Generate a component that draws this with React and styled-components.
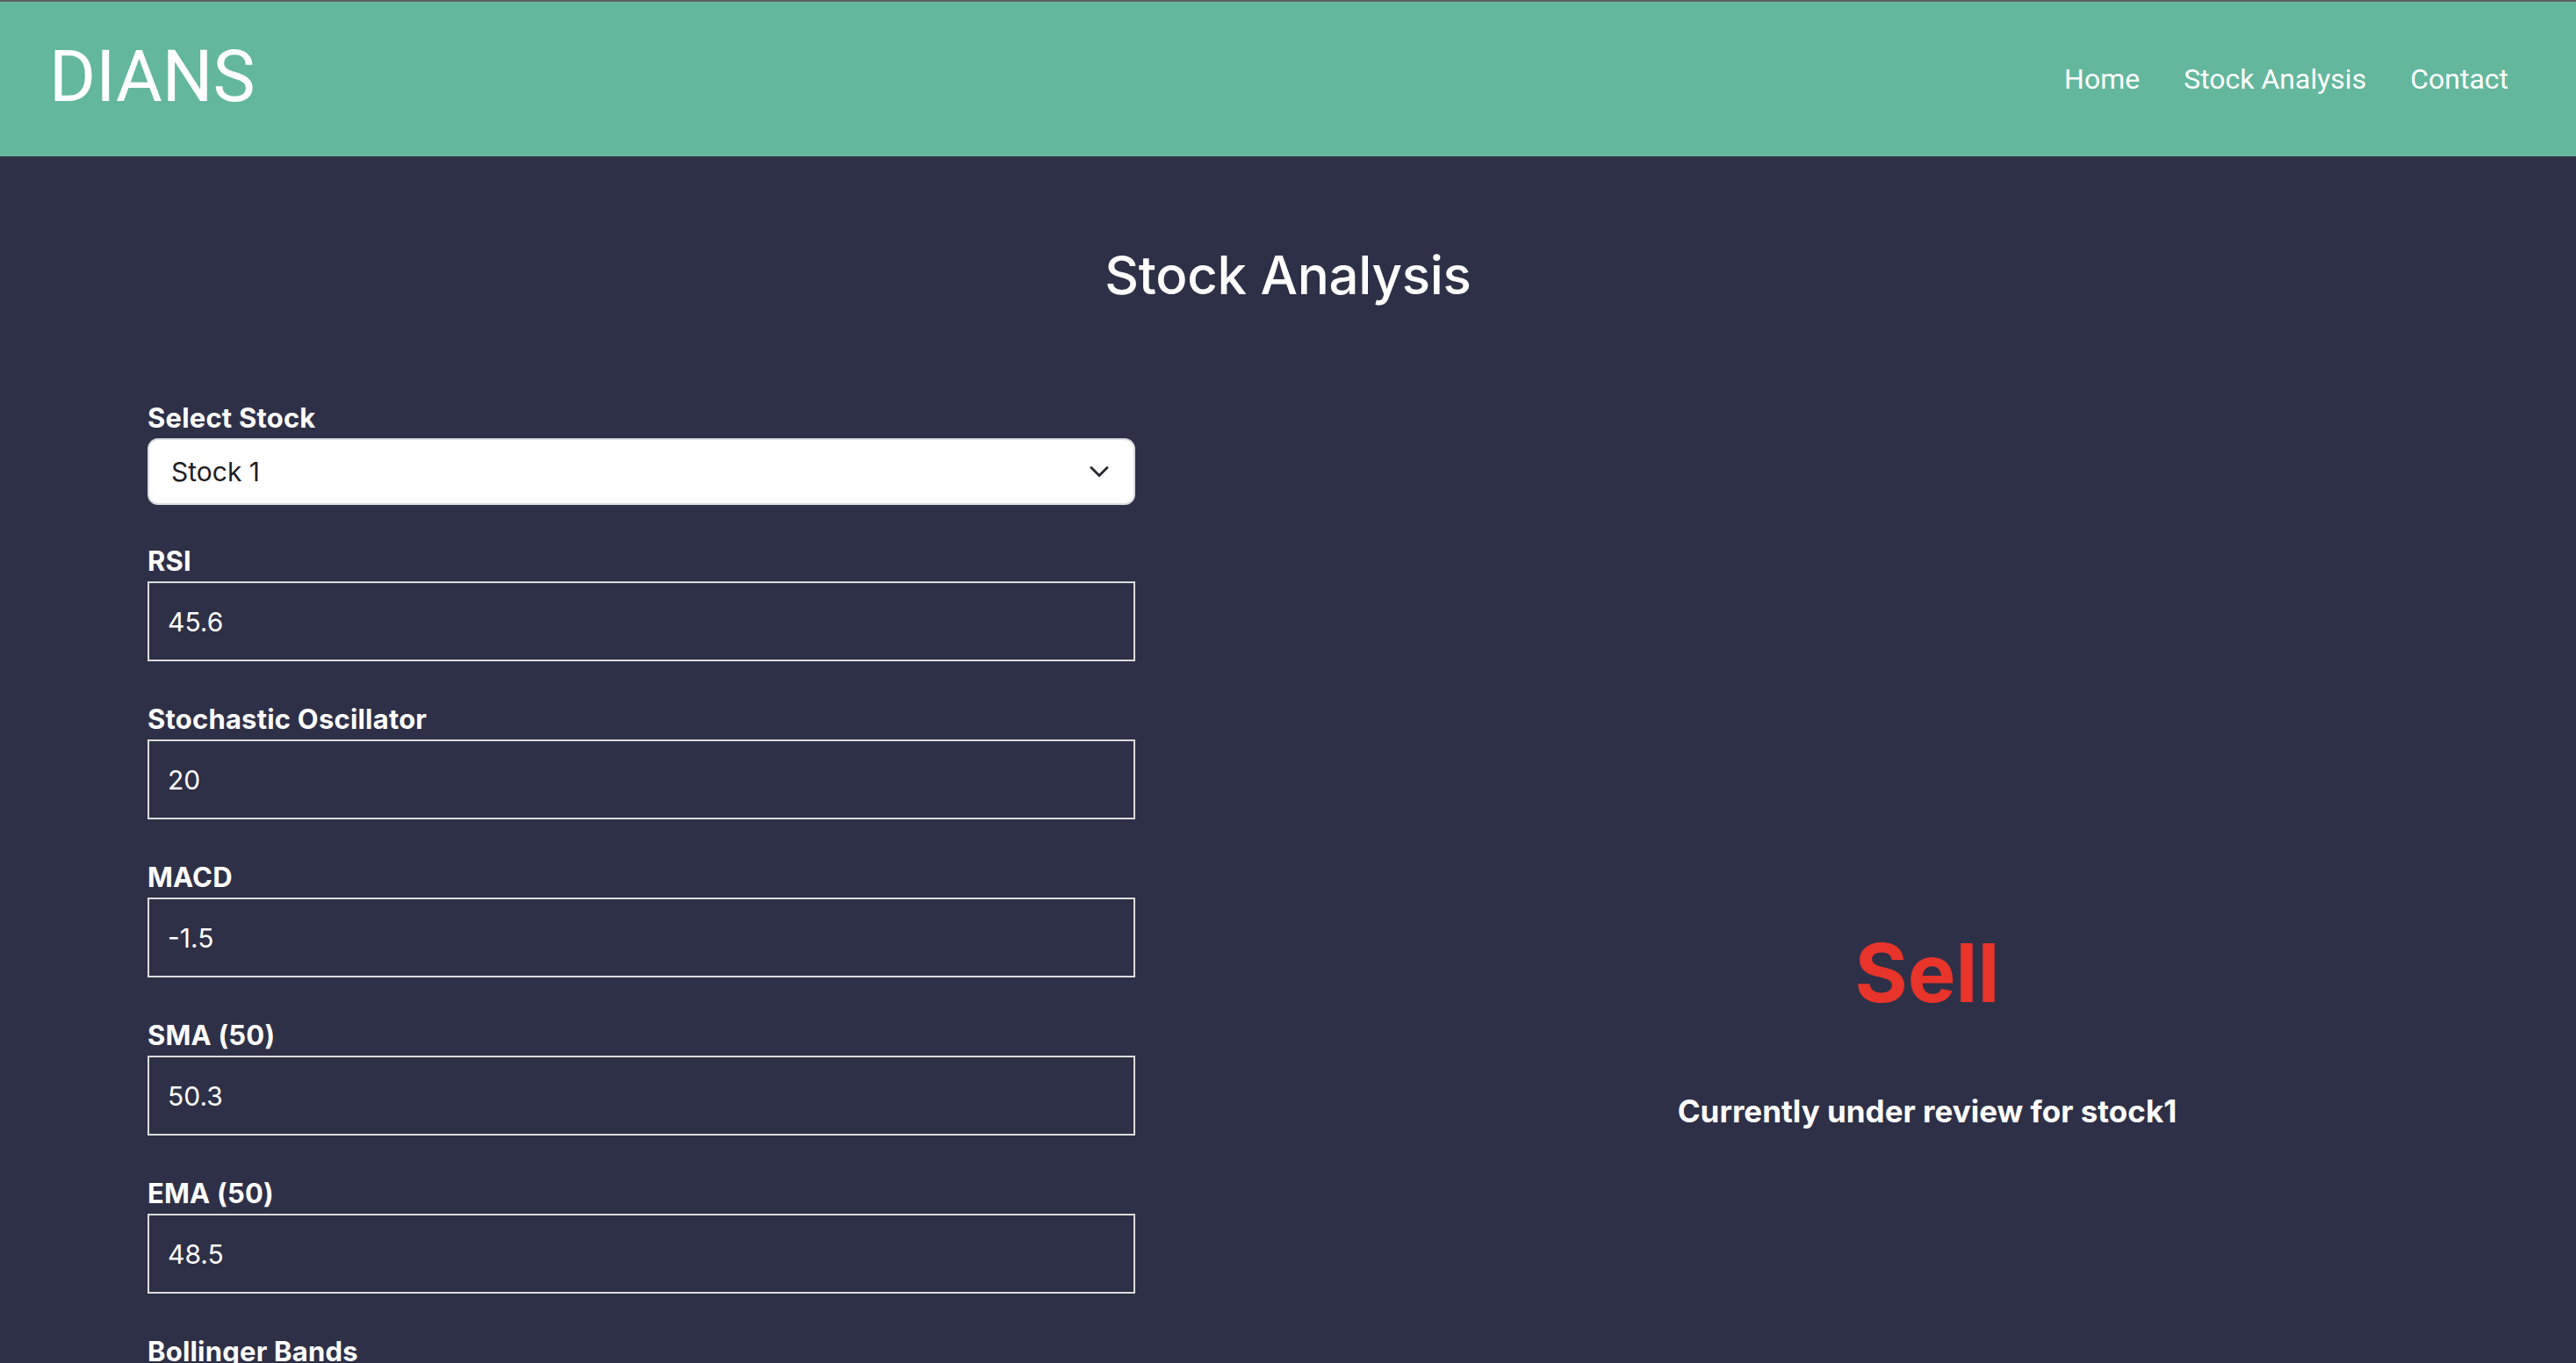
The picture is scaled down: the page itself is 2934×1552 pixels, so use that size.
import React, { useState } from 'react'
import styled, { createGlobalStyle } from 'styled-components'

const GlobalStyle = createGlobalStyle`
  * { box-sizing: border-box; }
  html, body {
    margin: 0;
    padding: 0;
    background: #2e3047;
  }
  body {
    font-family: Inter, "Noto Sans", sans-serif;
    color: #fff;
    border-top: 2px solid #5e5f63;
  }
`;

const indicators = [
  { id: 'rsi', label: 'RSI', value: '45.6' },
  { id: 'stochastic', label: 'Stochastic Oscillator', value: '20' },
  { id: 'macd', label: 'MACD', value: '-1.5' },
  { id: 'sma', label: 'SMA (50)', value: '50.3' },
  { id: 'ema', label: 'EMA (50)', value: '48.5' },
  { id: 'bollinger', label: 'Bollinger Bands', value: '52.1' },
];

const Header = () => (
  <StyledHeader>
    <StyledLogo>DIANS</StyledLogo>
    <StyledNav>
      <StyledNavLink href="#">Home</StyledNavLink>
      <StyledNavLink href="#">Stock Analysis</StyledNavLink>
      <StyledNavLink href="#">Contact</StyledNavLink>
    </StyledNav>
  </StyledHeader>
);

const Field = ({ label, value }) => (
  <StyledField>
    <StyledLabel>{label}</StyledLabel>
    <StyledInput type="text" defaultValue={value} />
  </StyledField>
);

const App = () => {
  const [stock, setStock] = useState('stock1');

  return (
    <>
      <GlobalStyle />
      <Header />
      <StyledMain>
        <StyledTitle>Stock Analysis</StyledTitle>
        <StyledLayout>
          <StyledForm onSubmit={(e) => e.preventDefault()}>
            <StyledField $first>
              <StyledLabel>Select Stock</StyledLabel>
              <StyledSelectWrap>
                <StyledSelect value={stock} onChange={(e) => setStock(e.target.value)}>
                  <option value="stock1">Stock 1</option>
                  <option value="stock2">Stock 2</option>
                  <option value="stock3">Stock 3</option>
                </StyledSelect>
                <StyledChevron viewBox="0 0 22 13" fill="none">
                  <path d="M2 2l9 9 9-9" stroke="#2c2d33" strokeWidth="3" strokeLinecap="round" strokeLinejoin="round" />
                </StyledChevron>
              </StyledSelectWrap>
            </StyledField>
            {indicators.map((item) => (
              <Field key={item.id} label={item.label} value={item.value} />
            ))}
          </StyledForm>
          <StyledResult>
            <StyledSignal>Sell</StyledSignal>
            <StyledReview>Currently under review for {stock}</StyledReview>
          </StyledResult>
        </StyledLayout>
      </StyledMain>
    </>
  )
}

const StyledHeader = styled.header`
  height: 176px;
  padding: 0 77px 0 56px;
  background-color: #63b79d;
  display: flex;
  align-items: center;
  justify-content: space-between;
  font-family: Roboto, "Liberation Sans", sans-serif;
`;

const StyledLogo = styled.h1`
  margin: 0 0 6px;
  font-size: 81px;
  font-weight: 400;
  color: #fff;
`;

const StyledNav = styled.nav`
  display: flex;
  gap: 50px;
`;

const StyledNavLink = styled.a`
  font-size: 32px;
  color: #fff;
  text-decoration: none;
`;

const StyledMain = styled.main`
  padding: 99px 168px 80px;
`;

const StyledTitle = styled.h2`
  margin: 0 0 109px;
  text-align: center;
  font-size: 60px;
  font-weight: 500;
  letter-spacing: -0.3px;
`;

const StyledLayout = styled.div`
  display: grid;
  grid-template-columns: 1125px 1fr;
  column-gap: 331px;
`;

const StyledForm = styled.form`
  display: flex;
  flex-direction: column;
  gap: 48px;
`;

const StyledField = styled.div`
  display: flex;
  flex-direction: column;
  gap: 5px;
  margin-bottom: ${(props) => (props.$first ? '-2px' : '0')};
`;

const StyledLabel = styled.label`
  font-size: 31px;
  line-height: 36px;
  font-weight: 700;
  letter-spacing: 0.2px;
`;

const StyledInput = styled.input`
  height: 91px;
  padding: 0 21px;
  border: 2px solid #dcdcdc;
  background: transparent;
  color: #fff;
  font-family: Inter, sans-serif;
  font-size: 30px;
  outline: none;
`;

const StyledSelectWrap = styled.div`
  position: relative;
`;

const StyledSelect = styled.select`
  width: 100%;
  height: 76px;
  padding: 0 70px 0 25px;
  appearance: none;
  border: 2px solid #d9dbe0;
  border-radius: 12px;
  background: #fff;
  color: #1f2024;
  font-family: Inter, sans-serif;
  font-size: 30px;
  outline: none;
`;

const StyledChevron = styled.svg`
  position: absolute;
  right: 30px;
  top: 50%;
  width: 22px;
  height: 13px;
  transform: translateY(-50%);
  pointer-events: none;
`;

const StyledResult = styled.section`
  padding-top: 595px;
  text-align: center;
`;

const StyledSignal = styled.div`
  font-size: 92px;
  font-weight: 700;
  line-height: 1.2;
  color: #e8342a;
`;

const StyledReview = styled.h3`
  margin: 81px 0 0;
  font-size: 35px;
  font-weight: 700;
  line-height: 1.2;
`;

export default App
